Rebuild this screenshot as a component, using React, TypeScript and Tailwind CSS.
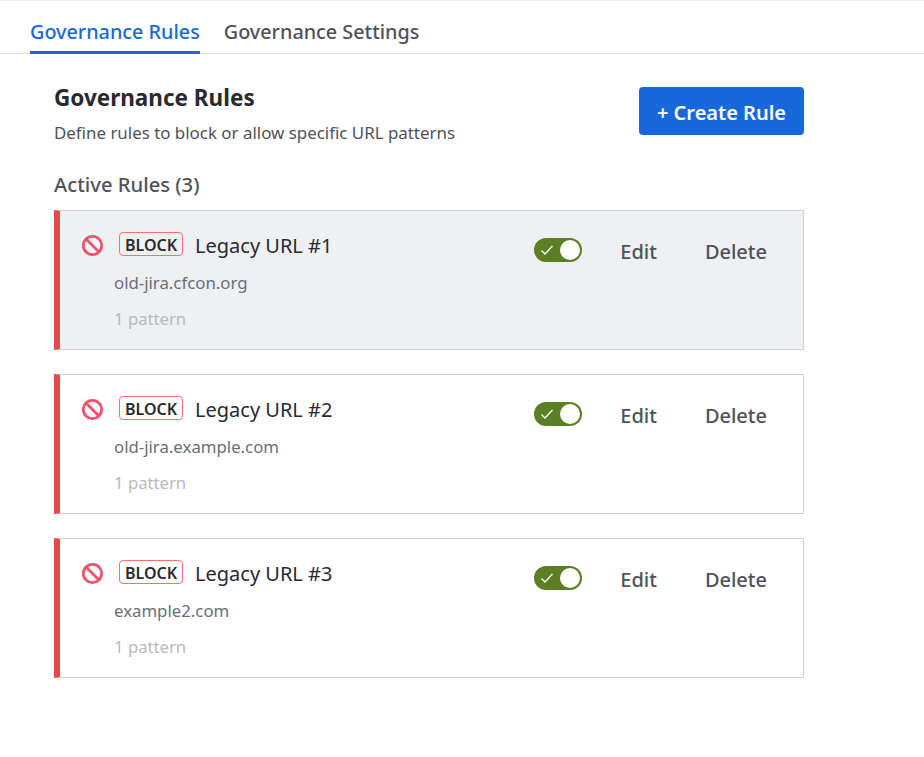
import React from "react";

function BlockIcon() {
  return (
    <svg width="24" height="24" viewBox="0 0 24 24" fill="none" className="shrink-0">
      <circle cx="12.5" cy="11.5" r="9.2" fill="#f7f5ff" stroke="#f4516c" strokeWidth="2.8" />
      <path d="M6 5 19 18" stroke="#f4516c" strokeWidth="2.8" />
    </svg>
  );
}

function Toggle() {
  return (
    <div className="w-12 h-6 rounded-full bg-[#5b7f24] flex items-center justify-between pl-[6px] pr-[2px]">
      <svg width="14" height="14" viewBox="0 0 14 14" fill="none">
        <path d="M1.5 7.5 5 11 12.5 3" stroke="#fff" strokeWidth="1.3" />
      </svg>
      <div className="w-5 h-5 rounded-full bg-white" />
    </div>
  );
}

function Rule({ name, url, active }: { name: string; url: string; active?: boolean }) {
  return (
    <div className={`h-[140px] flex items-start border border-[#d0d1d4] border-l-[6px] border-l-[#e34948] ${active ? "bg-[#eff0f2]" : "bg-white"}`}>
      <div className="ml-5 mt-[23px]"><BlockIcon /></div>
      <div className="ml-[10px] flex-1">
        <div className="mt-[21px] flex items-center h-6">
          <span className="ml-[5px] h-6 w-16 pt-px justify-center border border-[#f87168] rounded-[4px] text-[16px] font-semibold text-[#292a2e] flex items-center leading-none">BLOCK</span>
          <span className="ml-3 pt-[4px] text-[20px] text-[#292a2e] leading-6">{name}</span>
        </div>
        <div className="mt-[15px] text-[16.8px] leading-6 text-[#6b6e76]">{url}</div>
        <div className="mt-3 text-[16.7px] leading-6 text-[#b7b9be]">1 pattern</div>
      </div>
      <div className="mt-[25px] mr-[36px] flex items-center">
        <Toggle />
        <span className="ml-[38px] pt-1 text-[20px] font-medium text-[#505258] leading-6">Edit</span>
        <span className="ml-[48px] pt-1 text-[20px] font-medium text-[#505258] leading-6">Delete</span>
      </div>
    </div>
  );
}

export default function App() {
  return (
    <div className="w-[924px] h-[757px] bg-white border-t border-[#ebecee] overflow-hidden font-['Noto_Sans',sans-serif]">
      <div className="mt-[10px] h-[43px] pl-[30px] flex gap-6 border-b border-[#dddee1]">
        <div className="h-[43px] border-b-[3px] border-[#1868db] text-[19.8px] font-medium text-[#1868db] leading-[42px]">Governance Rules</div>
        <div className="h-[43px] text-[19.8px] font-medium text-[#505258] leading-[42px]">Governance Settings</div>
      </div>
      <div className="ml-[54px] w-[750px]">
        <div className="mt-[33px] flex justify-between items-start">
          <div>
            <h1 className="text-[22.5px] font-bold text-[#292a2e] leading-7 -mt-[3px]">Governance Rules</h1>
            <p className="mt-[9px] text-[16.9px] leading-6 text-[#505258]">Define rules to block or allow specific URL patterns</p>
          </div>
          <button className="w-[165px] h-12 pt-1 rounded-[4px] bg-[#1868db] text-white text-[20px] font-semibold">+ Create Rule</button>
        </div>
        <h2 className="mt-[25px] text-[20.2px] font-medium text-[#505258] leading-7">Active Rules (3)</h2>
        <div className="mt-[12px] flex flex-col gap-6">
          <Rule name="Legacy URL #1" url="old-jira.cfcon.org" active />
          <Rule name="Legacy URL #2" url="old-jira.example.com" />
          <Rule name="Legacy URL #3" url="example2.com" />
        </div>
      </div>
    </div>
  );
}
